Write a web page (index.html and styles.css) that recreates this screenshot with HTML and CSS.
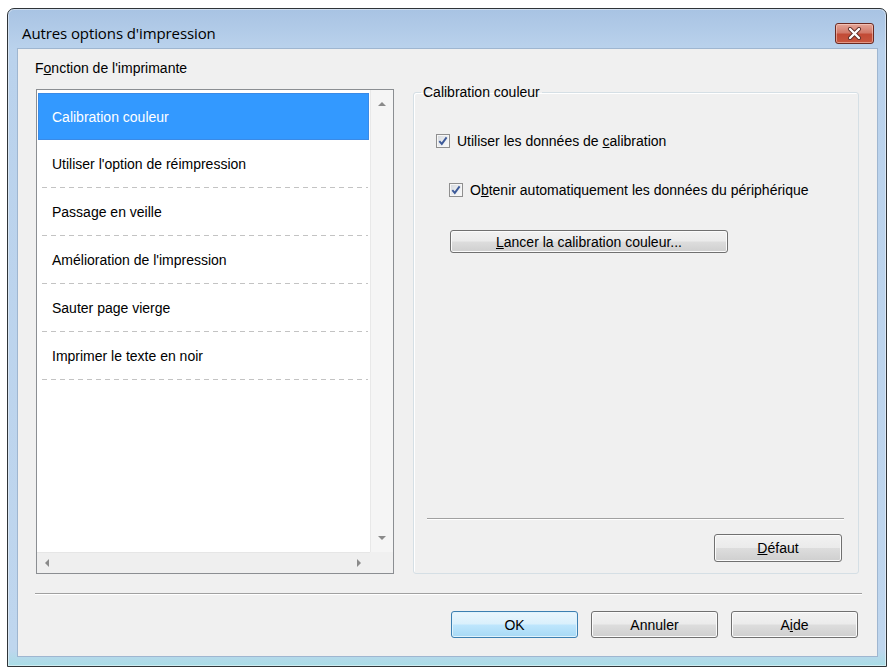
FILE: index.html
```html
<!DOCTYPE html>
<html>
<head>
<meta charset="UTF-8">
<title>Autres options d'impression</title>
<link rel="stylesheet" href="styles.css">
</head>
<body>
<div class="window">
  <div class="titlebar">
    <span class="title">Autres options d'impression</span>
    <span class="close">
      <svg width="17" height="13" viewBox="0 0 17 13">
        <path d="M4 2 L13 11 M13 2 L4 11" stroke="#5a2a24" stroke-width="4" stroke-linecap="round"/>
        <path d="M4 2 L13 11 M13 2 L4 11" stroke="#fff" stroke-width="2.4" stroke-linecap="round"/>
      </svg>
    </span>
  </div>
  <div class="client">
    <div class="main">
      <div class="left">
        <div class="caption">F<u>o</u>nction de l'imprimante</div>
        <div class="listbox">
          <ul class="items">
            <li class="selected">Calibration couleur</li>
            <li>Utiliser l'option de réimpression</li>
            <li>Passage en veille</li>
            <li>Amélioration de l'impression</li>
            <li>Sauter page vierge</li>
            <li>Imprimer le texte en noir</li>
          </ul>
          <div class="vscroll">
            <span class="arrow up"></span>
            <span class="arrow down"></span>
          </div>
          <div class="hscroll">
            <span class="arrow left-a"></span>
            <span class="arrow right-a"></span>
          </div>
          <div class="corner"></div>
        </div>
      </div>
      <fieldset class="group">
        <legend>Calibration couleur</legend>
        <div class="group-body">
          <label class="check-row">
            <span class="box"><svg width="12" height="12" viewBox="0 0 12 12"><path d="M2.3 6.2 L4.8 8.9 L9.6 2.4" fill="none" stroke="#3d5a99" stroke-width="1.9"/></svg></span>
            <span>Utiliser les données de <u>c</u>alibration</span>
          </label>
          <label class="check-row sub">
            <span class="box"><svg width="12" height="12" viewBox="0 0 12 12"><path d="M2.3 6.2 L4.8 8.9 L9.6 2.4" fill="none" stroke="#3d5a99" stroke-width="1.9"/></svg></span>
            <span>O<u>b</u>tenir automatiquement les données du périphérique</span>
          </label>
          <button class="btn calib"><u>L</u>ancer la calibration couleur...</button>
          <div class="spacer"></div>
          <div class="group-line"></div>
          <div class="group-foot">
            <button class="btn reset"><u>D</u>éfaut</button>
          </div>
        </div>
      </fieldset>
    </div>
    <div class="separator"></div>
    <div class="actions">
      <button class="btn default">OK</button>
      <button class="btn">Annuler</button>
      <button class="btn">A<u>i</u>de</button>
    </div>
  </div>
</div>
</body>
</html>
```

FILE: styles.css
```css
html,body{
margin:0;
padding:0;
background:#fff;
}
body{
font-family:"Liberation Sans",Arial,sans-serif;
font-size:14px;
line-height:16px;
color:#000;
}
ul{
margin:0;
padding:0;
list-style:none;
}
.window{
box-sizing:border-box;
width:880px;
height:659px;
margin:8px 0 0 7px;
border:1px solid #2f3438;
border-radius:7px 7px 0 0;
background:linear-gradient(to bottom,#a8c3e3 0,#bad2ec 40px,#bfd6ee 640px,#a9dde6 657px);
box-shadow:inset 0 0 0 1px rgba(255,255,255,.45);
display:flex;
flex-direction:column;
padding:0 8px 9px 9px;
}
.titlebar{
height:39px;
box-sizing:border-box;
padding:9px 4px 0 5px;
display:flex;
align-items:center;
justify-content:space-between;
}
.title{
font-family:"Open Sans","Liberation Sans",sans-serif;
font-size:15px;
color:#000;
letter-spacing:-0.1px;
}
.close{
width:39px;
height:21px;
box-sizing:border-box;
border:1px solid #6b2a22;
border-radius:3px;
background:linear-gradient(to bottom,#e4a597 0,#d27a6a 45%,#c24b36 55%,#c8573f 100%);
box-shadow:inset 0 0 0 1px rgba(255,220,210,.5);
display:flex;
align-items:center;
justify-content:center;
}
.client{
flex:1;
box-sizing:border-box;
background:#f0f0f0;
border:1px solid #9fb6d0;
padding-top:11px;
display:flex;
flex-direction:column;
}
.main{
display:grid;
grid-template-columns:359px 446px;
column-gap:19px;
padding-left:17px;
}
.caption{
height:16px;
margin-bottom:13px;
}
.listbox{
box-sizing:border-box;
width:358px;
height:485px;
margin-left:1px;
border:1px solid #8b8e92;
background:#fff;
display:grid;
grid-template-columns:333px 23px;
grid-template-rows:462px 21px;
}
.items{
padding-top:3px;
}
.items li{
height:48px;
box-sizing:border-box;
margin:0 1px;
padding-left:14px;
display:flex;
align-items:center;
background:repeating-linear-gradient(90deg,#c3c3c3 0 5px,transparent 5px 9px) 4px 100%/calc(100% - 5px) 1px no-repeat;
}
.items li.selected{
height:47px;
background:#3399ff;
border:1px solid #3a8ae6;
padding-left:13px;
color:#fff;
}
.vscroll{
background:#f5f5f5;
border-left:1px solid #e8e8e8;
display:flex;
flex-direction:column;
align-items:center;
justify-content:space-between;
padding:12px 0 12px;
}
.hscroll{
background:#efefef;
border-top:1px solid #e6e6e6;
display:flex;
align-items:center;
justify-content:space-between;
padding:0 9px 0 8px;
}
.corner{
background:#f0f0f0;
}
.arrow{
width:0;
height:0;
display:block;
}
.arrow.up{
border-left:4px solid transparent;
border-right:4px solid transparent;
border-bottom:4px solid #8a8a8a;
}
.arrow.down{
border-left:4px solid transparent;
border-right:4px solid transparent;
border-top:4px solid #8a8a8a;
}
.arrow.left-a{
border-top:4px solid transparent;
border-bottom:4px solid transparent;
border-right:4px solid #8a8a8a;
}
.arrow.right-a{
border-top:4px solid transparent;
border-bottom:4px solid transparent;
border-left:4px solid #8a8a8a;
}
.group{
margin:24px 0 0 0;
padding:0;
min-width:0;
border:1px solid #d5dfe5;
border-radius:3px;
box-shadow:inset 1px 1px 0 #fff;
display:flex;
flex-direction:column;
}
.group legend{
margin-left:7px;
padding:0 2px;
}
.group-body{
flex:1;
display:flex;
flex-direction:column;
align-items:flex-start;
padding:33px 0 11px 22px;
}
.check-row{
display:flex;
align-items:center;
gap:7px;
height:16px;
}
.check-row.sub{
margin:33px 0 0 13px;
}
.box{
width:14px;
height:14px;
box-sizing:border-box;
border:1px solid #8f8f8f;
background:linear-gradient(135deg,#d2d6dc 0,#eef0f2 60%,#fafafa 100%);
box-shadow:inset 0 0 0 1px #f6f6f6;
display:flex;
align-items:center;
justify-content:center;
}
.btn{
font-family:"Liberation Sans",Arial,sans-serif;
font-size:14px;
color:#000;
box-sizing:border-box;
height:27px;
width:127px;
padding:0;
border:1px solid #707070;
border-radius:3px;
background:linear-gradient(to bottom,#f2f2f2 0,#ebebeb 49%,#dddddd 51%,#cfcfcf 100%);
box-shadow:inset 0 0 0 1px #fbfbfb;
}
.btn.calib{
width:278px;
height:23px;
margin:32px 0 0 14px;
}
.btn.default{
border-color:#3c7fb1;
background:linear-gradient(to bottom,#eaf6fd 0,#d9f0fc 49%,#bee6fd 51%,#a7d9f5 100%);
box-shadow:inset 0 0 0 1px #dff3fd;
}
.spacer{
flex:1;
}
.group-line{
align-self:stretch;
height:1px;
margin:0 14px 0 -9px;
background:#a0a0a0;
border-bottom:1px solid #fff;
}
.group-foot{
align-self:stretch;
display:flex;
justify-content:flex-end;
padding:14px 16px 0 0;
}
.btn.reset{
width:128px;
height:28px;
}
.separator{
height:1px;
margin:19px 15px 0 17px;
background:#a0a0a0;
border-bottom:1px solid #fff;
}
.actions{
display:flex;
justify-content:flex-end;
gap:13px;
padding:16px 19px 0 0;
}
```
